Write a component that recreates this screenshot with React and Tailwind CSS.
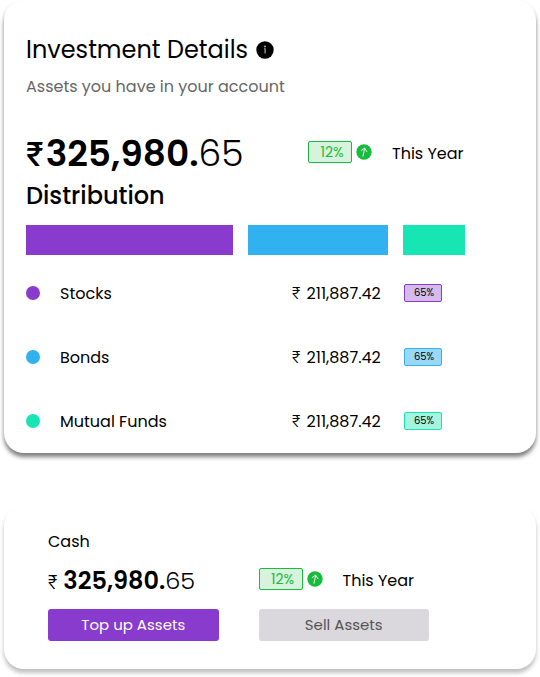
import React from "react";

const holdings = [
  { name: "Stocks", value: "211,887.42", share: "65%", dot: "bg-[#883bcd]", badge: "border-[#883bcd] bg-[#d5bbec]" },
  { name: "Bonds", value: "211,887.42", share: "65%", dot: "bg-[#31b1ef]", badge: "border-[#31b1ef] bg-[#9ad8f7]" },
  { name: "Mutual Funds", value: "211,887.42", share: "65%", dot: "bg-[#17e6b4]", badge: "border-[#17e6b4] bg-[#a5f4df]" },
];

function InfoIcon() {
  return (
    <svg className="size-[18px]" viewBox="0 0 18 18" aria-hidden="true">
      <circle cx="9" cy="9" r="8.7" fill="#000" />
      <circle cx="9" cy="5.4" r="0.9" fill="#ccc" />
      <path d="M8.2 7.8h.9v4.8" fill="none" stroke="#bbb" strokeWidth="1.1" />
    </svg>
  );
}

function UpIcon() {
  return (
    <svg className="size-4" viewBox="0 0 16 16" aria-hidden="true">
      <circle cx="8" cy="8" r="7.7" fill="#18bb3c" />
      <path d="M7 12.2 8.6 4.2M5.3 6.4 8.7 4.1 10.8 7.6" fill="none" stroke="#fff" strokeWidth="0.9" strokeLinecap="round" strokeLinejoin="round" />
    </svg>
  );
}

function Growth() {
  return (
    <div className="flex items-center">
      <div className="mb-1 flex items-center gap-1">
        <span className="flex h-[22px] w-11 items-center justify-center rounded-xs border border-[#18bb3c] bg-[#d8f3dd] pl-1 text-sm text-[#18bb3c]">
          12%
        </span>
        <UpIcon />
      </div>
      <span className="ml-5 whitespace-nowrap text-base">This Year</span>
    </div>
  );
}

export default function App() {
  return (
    <main className="bg-white px-1 pb-2 font-['Poppins','Inter',sans-serif] text-black">
      <section className="rounded-[20px] bg-white pt-8 pr-[71px] pb-[19px] pl-[22px] shadow-[0_4px_4px_rgba(0,0,0,0.5)]">
        <div className="flex items-center gap-2">
          <h1 className="text-2xl leading-9">Investment Details</h1>
          <InfoIcon />
        </div>
        <p className="mt-[7px] text-base leading-6 text-[#666]">Assets you have in your account</p>

        <div className="mt-[31px] grid h-12 grid-cols-[1fr_157px] items-center">
          <p className="text-4xl leading-[48px] font-light whitespace-nowrap">
            <span className="mr-0.5 font-['Inter'] text-[32px] leading-none font-medium">₹</span>
            <span className="font-semibold">325,980.</span>65
          </p>
          <Growth />
        </div>

        <h2 className="text-2xl leading-9 font-medium">Distribution</h2>
        <div className="mt-[11px] grid h-[30px] grid-cols-[207fr_140fr_62fr] gap-x-[15px]">
          <div className="bg-[#883bcd]" />
          <div className="bg-[#31b1ef]" />
          <div className="bg-[#17e6b4]" />
        </div>

        <ul className="mt-[25px] flex flex-col gap-[38px]">
          {holdings.map((h) => (
            <li key={h.name} className="grid h-[26px] grid-cols-[34px_1fr_112px_61px] items-center text-base leading-6">
              <span className={`size-3.5 rounded-full ${h.dot}`} />
              <span className="pt-0.5">{h.name}</span>
              <span className="pt-0.5 whitespace-nowrap">
                <span className="mr-0.5 font-['Inter'] leading-none font-light">₹</span> {h.value}
              </span>
              <span className={`flex h-[18px] w-[38px] items-center justify-center rounded-xs border pl-0.5 text-[10px] ${h.badge}`}>
                {h.share}
              </span>
            </li>
          ))}
        </ul>
      </section>

      <section className="mt-[53px] rounded-[20px] bg-white pt-6 pr-[107px] pb-7 pl-11 shadow-[0_4px_4px_rgba(0,0,0,0.25)]">
        <h2 className="text-base leading-6">Cash</h2>
        <div className="mt-[7px] grid h-10 grid-cols-2 items-center gap-x-10">
          <p className="text-2xl leading-10 font-light whitespace-nowrap">
            <span className="mr-1.5 font-['Inter'] text-lg leading-none">₹</span>
            <span className="font-semibold">325,980.</span>65
          </p>
          <Growth />
        </div>
        <div className="mt-2 grid grid-cols-2 gap-x-10">
          <button type="button" className="h-8 rounded-[3px] bg-[#883bcd] text-[15px] text-white">Top up Assets</button>
          <button type="button" className="h-8 rounded-[3px] bg-[#dad7dd] text-[15px] text-[#555]">Sell Assets</button>
        </div>
      </section>
    </main>
  );
}
